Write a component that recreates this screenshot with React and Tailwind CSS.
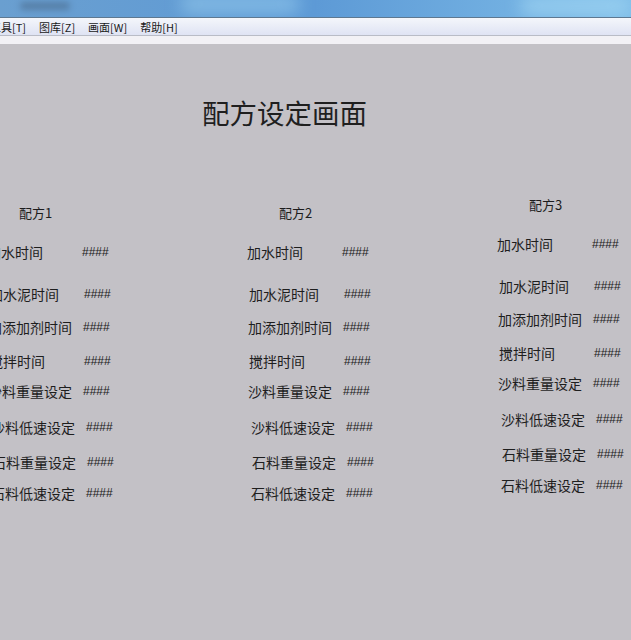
import React from 'react'

// 配方数据：每一行的标签和相对偏移
const ROWS = [
  { label: '加水时间', mt: 'mt-[19px]', dx: 'ml-0' },
  { label: '加水泥时间', mt: 'mt-[22px]', dx: 'ml-[2px]' },
  { label: '加添加剂时间', mt: 'mt-[13px]', dx: 'ml-[1px]' },
  { label: '搅拌时间', mt: 'mt-[14px]', dx: 'ml-[2px]' },
  { label: '沙料重量设定', mt: 'mt-[10px]', dx: 'ml-[1px]' },
  { label: '沙料低速设定', mt: 'mt-[16px]', dx: 'ml-[4px]' },
  { label: '石料重量设定', mt: 'mt-[15px]', dx: 'ml-[5px]' },
  { label: '石料低速设定', mt: 'mt-[11px]', dx: 'ml-[4px]' },
]

const MENUS = ['工具[T]', '图库[Z]', '画面[W]', '帮助[H]']

function RecipeColumn({ title, className }) {
  return (
    <div className={`w-[130px] shrink-0 ${className}`}>
      <div className="h-[20px] leading-[20px] pl-[32px] text-[13px] text-[#1c1c1c]">{title}</div>
      {ROWS.map((row) => (
        <div key={row.label} className={`flex h-[20px] items-center ${row.mt} ${row.dx}`}>
          <span className="w-[95px] shrink-0 whitespace-nowrap text-[14px] text-[#1e1e1e]">{row.label}</span>
          <span className="font-['Liberation_Sans',sans-serif] text-[12px] text-[#1a1a1a]">####</span>
        </div>
      ))}
    </div>
  )
}

export default function App() {
  return (
    <div className="w-[631px] h-[640px] overflow-hidden bg-[#c3c1c6] font-['Noto_Sans_CJK_SC','Noto_Sans',sans-serif] flex flex-col">
      {/* 标题栏 */}
      <div className="h-[17px] shrink-0 bg-gradient-to-r from-[#6a9fd0] via-[#5d9ad6] to-[#7fbde8] relative overflow-hidden">
        <div className="absolute left-[20px] top-[2px] w-[50px] h-[8px] rounded-full bg-[#44607e] opacity-50 blur-[3px]" />
        <div className="absolute left-[180px] top-[-6px] w-[120px] h-[20px] rounded-full bg-[#9fd4f2] opacity-50 blur-[8px]" />
        <div className="absolute left-[520px] top-[-4px] w-[110px] h-[20px] rounded-full bg-[#a6daf5] opacity-60 blur-[8px]" />
      </div>
      <div className="h-px shrink-0 bg-[#5d7891]" />

      {/* 菜单栏 */}
      <div className="h-[17px] shrink-0 bg-gradient-to-b from-[#f4f6fb] to-[#dfe3f3] flex items-center">
        <div className="flex items-center gap-[13px] ml-[-10px] pt-px text-[11px] leading-none text-[#1a1a1a]">
          {MENUS.map((m) => (
            <span key={m} className="whitespace-nowrap">{m}</span>
          ))}
        </div>
      </div>
      <div className="h-px shrink-0 bg-[#b9bcc6]" />
      <div className="h-[8px] shrink-0 bg-[#f2f1f5]" />

      {/* 画面 */}
      <div className="flex-1 flex flex-col">
        <div className="mt-[53px] ml-[202px] text-[27.5px] leading-[30px] text-[#1f1f1f] whitespace-nowrap">配方设定画面</div>
        <div className="flex items-start mt-[76px] ml-[-13px]">
          <RecipeColumn title="配方1" className="mt-0" />
          <RecipeColumn title="配方2" className="ml-[130px] mt-0" />
          <RecipeColumn title="配方3" className="ml-[120px] mt-[-8px]" />
        </div>
      </div>
    </div>
  )
}
